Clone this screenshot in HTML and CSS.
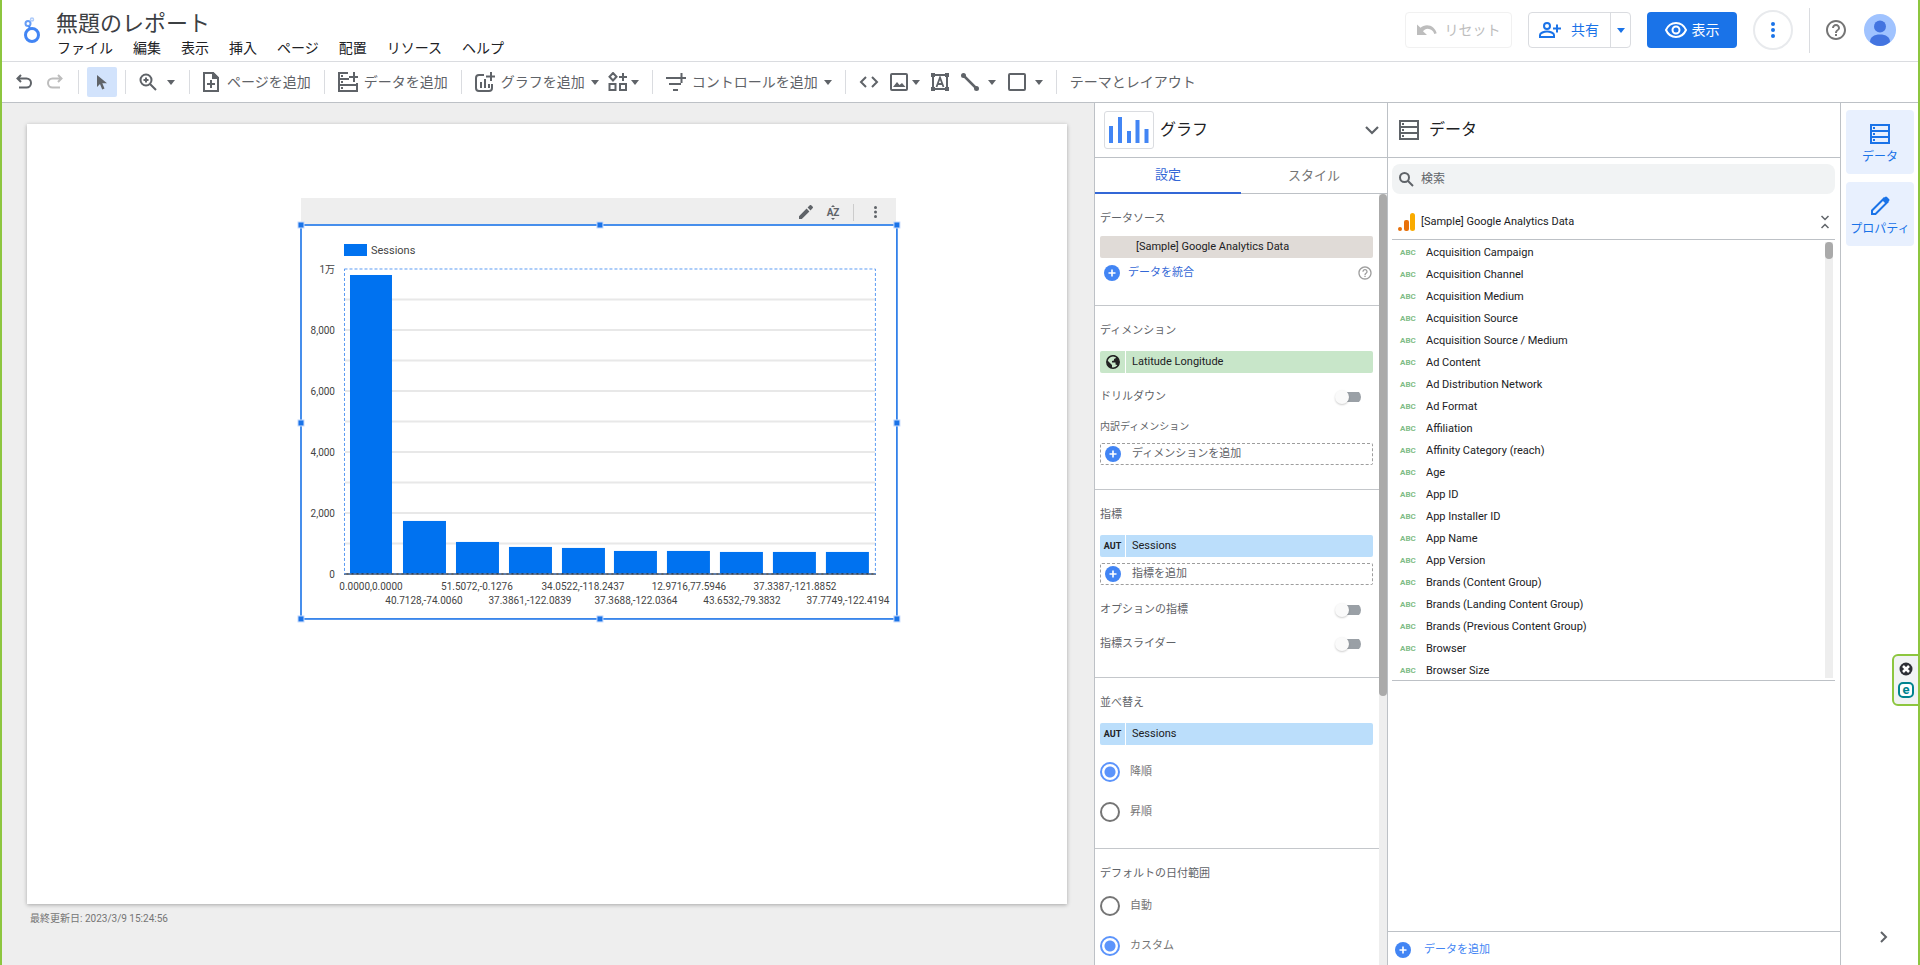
FILE: index.html
```html
<!DOCTYPE html>
<html lang="ja">
<head>
<meta charset="utf-8">
<title>無題のレポート</title>
<link rel="stylesheet" href="styles.css">
</head>
<body>
<svg class="defs" aria-hidden="true">
  <symbol id="caret" viewBox="0 0 8 5"><path d="M0 0h8L4 5z" fill="currentColor"/></symbol>
  <symbol id="plus" viewBox="0 0 16 16"><circle cx="8" cy="8" r="8" fill="#4285f4"/><path d="M8 4.500v7M4.500 8h7" stroke="#fff" stroke-width="1.600"/></symbol>
  <symbol id="rows" viewBox="0 0 20 20"><path d="M1 1h18v18H1zM1 7h18M1 13h18" fill="none" stroke="currentColor" stroke-width="2"/><path d="M3 3h2v2H3zM3 9h2v2H3zM3 15h2v2H3z" fill="currentColor"/></symbol>
  <symbol id="help" viewBox="0 0 24 24"><path fill="currentColor" d="M11 18h2v-2h-2v2zm1-16C6.480 2 2 6.480 2 12s4.480 10 10 10 10-4.480 10-10S17.520 2 12 2zm0 18c-4.410 0-8-3.590-8-8s3.590-8 8-8 8 3.590 8 8-3.590 8-8 8zm0-14c-2.210 0-4 1.790-4 4h2c0-1.100.9-2 2-2s2 .9 2 2c0 2-3 1.750-3 5h2c0-2.250 3-2.500 3-5 0-2.210-1.790-4-4-4z"/></symbol>
  <symbol id="dots" viewBox="0 0 4 16"><circle cx="2" cy="2" r="2"/><circle cx="2" cy="8" r="2"/><circle cx="2" cy="14" r="2"/></symbol>
</svg>

<div class="app">
  <header class="header">
    <svg class="logo" viewBox="0 0 16 26" fill="none"><circle cx="8" cy="18" r="6.500" stroke="#4285f4" stroke-width="3"/><circle cx="4" cy="6.500" r="2.500" stroke="#669df6" stroke-width="2"/><circle cx="8" cy="2.500" r="1.500" stroke="#aecbfa" stroke-width="1.500"/><path d="M5 9l1 3" stroke="#4285f4" stroke-width="2"/></svg>
    <div class="titles">
      <h1 class="title">無題のレポート</h1>
      <nav class="menu">
        <button>ファイル</button><button>編集</button><button>表示</button><button>挿入</button><button>ページ</button><button>配置</button><button>リソース</button><button>ヘルプ</button>
      </nav>
    </div>
    <div class="actions">
      <button class="btn btn-reset" disabled><svg width="20" height="12" viewBox="0 0 20 12"><path fill="currentColor" d="M10 1.200c-2.500 0-4.800 1-6.500 2.500L0 .4V11h10L6 7.200c1.300-1.200 2.600-2.400 4.700-2.400 3.200 0 5.700 2.200 6.600 5.200l2.400-.8C18.400 4.700 14.800 1.200 10 1.200z"/></svg>リセット</button>
      <div class="share">
        <button class="share-main"><svg width="22" height="16" viewBox="0 0 22 16" fill="none" stroke="currentColor" stroke-width="2"><circle cx="8" cy="4" r="3"/><path d="M1 15v-2c0-2 4-3.500 7-3.500s7 1.500 7 3.500v2zM18 2.500v8M14 6.500h8"/></svg>共有</button>
        <button class="share-more" aria-label="共有オプション"><svg width="8" height="5"><use href="#caret"/></svg></button>
      </div>
      <button class="btn btn-view"><svg width="22" height="16" viewBox="0 0 22 16" fill="none" stroke="currentColor" stroke-width="2"><path d="M1 8c2-4.500 5.700-7 10-7s8 2.500 10 7c-2 4.500-5.700 7-10 7S3 12.500 1 8z"/><circle cx="11" cy="8" r="3.500"/></svg>表示</button>
      <button class="more" aria-label="その他"><svg width="4" height="16" fill="#1a73e8"><use href="#dots"/></svg></button>
      <span class="header-rule"></span>
      <button class="help" aria-label="ヘルプ"><svg width="24" height="24"><use href="#help"/></svg></button>
      <button class="avatar" aria-label="アカウント"><svg width="32" height="32" viewBox="0 0 32 32"><circle cx="16" cy="16" r="16" fill="#a0c3ff"/><circle cx="16" cy="12.500" r="6" fill="#4374e0"/><path d="M6 28c0-5 4-7.500 10-7.500S26 23 26 28c-3 2.600-6 4-10 4s-7-1.400-10-4z" fill="#4374e0"/></svg></button>
    </div>
  </header>

  <div class="toolbar">
    <button class="tool undo" aria-label="元に戻す"><svg width="16" height="16" viewBox="0 0 16 16" fill="none" stroke="currentColor" stroke-width="2"><path d="M5 1L1.500 4.500 5 8M2 4.500h8.500a4.500 4.500 0 010 9H3"/></svg></button>
    <button class="tool redo" aria-label="やり直し" disabled><svg width="16" height="16" viewBox="0 0 16 16" fill="none" stroke="currentColor" stroke-width="2"><path d="M11 1l3.500 3.500L11 8M14 4.500H5.500a4.500 4.500 0 000 9H13"/></svg></button>
    <span class="rule"></span>
    <button class="tool pointer" aria-label="選択"><svg width="10" height="15" viewBox="0 0 10 15"><path fill="currentColor" d="M0 0v12l3-3 2.200 5.500 2.300-1L5.300 8.300H10z"/></svg></button>
    <span class="rule"></span>
    <button class="tool zoom" aria-label="ズーム"><svg width="18" height="18" viewBox="0 0 18 18" fill="none" stroke="currentColor" stroke-width="2"><circle cx="7" cy="7" r="5.500"/><path d="M11 11l6 6M7 4.500v5M4.500 7h5"/></svg><svg width="8" height="5"><use href="#caret"/></svg></button>
    <span class="rule"></span>
    <button class="tool add-page"><svg width="16" height="20" viewBox="0 0 16 20" fill="none" stroke="currentColor" stroke-width="2"><path d="M10 1H1v18h14V6zM8 8v8M4 12h8"/><path d="M10 1v5h5z" fill="currentColor"/></svg>ページを追加</button>
    <span class="rule"></span>
    <button class="tool"><svg width="20" height="20" viewBox="0 0 20 20" fill="none" stroke="currentColor" stroke-width="2"><path d="M10 1H1v18h18v-6H1M1 7h10M16 0v10M11 5h9M19 13v-2"/><path d="M4 3v2M4 9v2M4 15v2" stroke-width="2"/></svg>データを追加</button>
    <span class="rule"></span>
    <button class="tool"><svg width="20" height="20" viewBox="0 0 20 20" fill="none" stroke="currentColor" stroke-width="2"><path d="M9 3H4a3 3 0 00-3 3v10a3 3 0 003 3h10a3 3 0 003-3v-4M6 10v6M10 7v9M14 12v4M16 0v9M11 4.500h9"/></svg>グラフを追加<svg width="8" height="5"><use href="#caret"/></svg></button>
    <button class="tool community" aria-label="コミュニティ ビジュアリゼーション"><svg width="20" height="20" viewBox="0 0 20 20" fill="none" stroke="currentColor" stroke-width="2"><path d="M5 1l3.500 3.800L5 8.500 1.500 4.800zM1.500 12h6v6h-6zM12 12h6v6h-6zM15 1v8M11 5h8"/></svg><svg width="8" height="5"><use href="#caret"/></svg></button>
    <span class="rule"></span>
    <button class="tool"><svg width="20" height="18" viewBox="0 0 20 18" fill="none" stroke="currentColor" stroke-width="2"><path d="M0 5h11M3 11h12M7 17h5M15.500 0v10M11 5h9"/></svg>コントロールを追加<svg width="8" height="5"><use href="#caret"/></svg></button>
    <span class="rule"></span>
    <div class="inserts">
      <button class="tool" aria-label="URL を埋め込む"><svg width="20" height="12" viewBox="0 0 20 12" fill="none" stroke="currentColor" stroke-width="2"><path d="M7 1L2 6l5 5M13 1l5 5-5 5"/></svg></button>
      <button class="tool" aria-label="画像"><svg width="18" height="18" viewBox="0 0 18 18"><rect x="1" y="1" width="16" height="16" rx="1" fill="none" stroke="currentColor" stroke-width="2"/><path fill="currentColor" d="M3 14l4-5 2.500 3 2.500-2 3.500 4z"/></svg><svg width="8" height="5"><use href="#caret"/></svg></button>
      <button class="tool" aria-label="テキスト"><svg width="18" height="18" viewBox="0 0 18 18" fill="none" stroke="currentColor" stroke-width="2"><path d="M2 2h14v14H2z"/><path d="M5.500 14L9 4.500l3.500 9.500M6.500 11h5" stroke-width="1.800"/><path d="M0 0h4v4H0zM14 0h4v4h-4zM0 14h4v4H0zM14 14h4v4h-4z" fill="currentColor" stroke="none"/></svg></button>
      <button class="tool line-tool" aria-label="線"><svg width="18" height="18" viewBox="0 0 18 18"><path d="M2.500 2.500l13 13" stroke="currentColor" stroke-width="2.500"/><circle cx="2.500" cy="2.500" r="2.500" fill="currentColor"/><circle cx="15.500" cy="15.500" r="2.500" fill="currentColor"/></svg><svg width="8" height="5"><use href="#caret"/></svg></button>
      <button class="tool line-tool" aria-label="図形"><svg width="18" height="18" viewBox="0 0 18 18"><rect x="1" y="1" width="16" height="16" rx="1" fill="none" stroke="currentColor" stroke-width="2"/></svg><svg width="8" height="5"><use href="#caret"/></svg></button>
    </div>
    <span class="rule"></span>
    <button class="tool">テーマとレイアウト</button>
  </div>

  <div class="body">
    <main class="workspace">
      <div class="page">
        <div class="widget">
          <div class="widget-bar">
            <button aria-label="編集"><svg width="14" height="14" viewBox="0 0 14 14"><path fill="currentColor" d="M0 11.200V14h2.800l7.600-7.600-2.800-2.800zM13.300 3.500c.9-.8.9-1.400.2-2.100l-1-1c-.7-.6-1.300-.6-2 .1L8.600 2.500l2.900 2.900z"/></svg></button>
            <button class="az" aria-label="並べ替え"><svg width="6" height="3" viewBox="0 0 6 3"><path d="M3 0l2 2H1z" fill="currentColor"/></svg><span>AZ</span><svg width="6" height="3" viewBox="0 0 6 3"><path d="M3 3l2-2H1z" fill="currentColor"/></svg></button>
            <span class="widget-rule"></span>
            <button aria-label="その他"><svg width="3" height="12" viewBox="0 0 4 16" fill="currentColor"><use href="#dots"/></svg></button>
          </div>
          <svg class="chart" viewBox="0 0 596 395">
            <rect x="43" y="20" width="23" height="12" fill="#0072f0"/>
            <text class="legend" x="70" y="30">Sessions</text>
            <path d="M44 75.500h530M44 106h530M44 136.500h530M44 167h530M44 197.500h530M44 228h530M44 258.500h530M44 289h530M44 319.500h530" stroke="#e8e8e8" stroke-width="2"/>
            <g class="axis-y">
              <text x="34" y="49">1万</text><text x="34" y="110">8,000</text><text x="34" y="171">6,000</text><text x="34" y="232">4,000</text><text x="34" y="293">2,000</text><text x="34" y="354">0</text>
            </g>
            <g fill="#0072f0">
              <rect x="49" y="51" width="42" height="299"/><rect x="102" y="297" width="43" height="53"/><rect x="155" y="318" width="43" height="32"/><rect x="208" y="323" width="43" height="27"/><rect x="261" y="324" width="43" height="26"/><rect x="313" y="327" width="43" height="23"/><rect x="366" y="327" width="43" height="23"/><rect x="419" y="328" width="43" height="22"/><rect x="472" y="328" width="43" height="22"/><rect x="525" y="328" width="43" height="22"/>
            </g>
            <path d="M43 350h532" stroke="#333" stroke-width="1.500"/>
            <rect x="43.500" y="45" width="531" height="305" fill="none" stroke="#5b9bf3" stroke-dasharray="3 2"/>
            <g class="axis-x">
              <text x="70" y="366">0.0000,0.0000</text><text x="176" y="366">51.5072,-0.1276</text><text x="282" y="366">34.0522,-118.2437</text><text x="388" y="366">12.9716,77.5946</text><text x="494" y="366">37.3387,-121.8852</text>
              <text x="123" y="380">40.7128,-74.0060</text><text x="229" y="380">37.3861,-122.0839</text><text x="335" y="380">37.3688,-122.0364</text><text x="441" y="380">43.6532,-79.3832</text><text x="547" y="380">37.7749,-122.4194</text>
            </g>
            <rect x="0" y="1" width="596" height="394" fill="none" stroke="#1a73e8" stroke-width="1.600"/>
            <g fill="#1a73e8" stroke="#c6dafc">
              <rect x="-3" y="-2" width="6" height="6"/><rect x="296" y="-2" width="6" height="6"/><rect x="593" y="-2" width="6" height="6"/>
              <rect x="-3" y="196" width="6" height="6"/><rect x="593" y="196" width="6" height="6"/>
              <rect x="-3" y="392" width="6" height="6"/><rect x="296" y="392" width="6" height="6"/><rect x="593" y="392" width="6" height="6"/>
            </g>
          </svg>
        </div>
      </div>
      <p class="updated">最終更新日: 2023/3/9 15:24:56</p>
    </main>

    <aside class="props">
      <div class="panel-head props-head">
        <span class="chart-type"><svg width="40" height="30" viewBox="0 0 40 30"><path d="M2 11v17M11 2v26M20 16v12M28.500 5v23M37.500 14v14" stroke="#4285f4" stroke-width="4"/></svg></span>
        <h2>グラフ</h2>
        <button class="chevron" aria-label="グラフの種類"><svg width="14" height="9" viewBox="0 0 14 9" fill="none" stroke="#5f6368" stroke-width="2.200"><path d="M1 1l6 6 6-6"/></svg></button>
      </div>
      <div class="tabs"><button class="tab active">設定</button><button class="tab">スタイル</button></div>
      <div class="scroll">
        <div class="sections">
          <section class="section source">
            <h3>データソース</h3>
            <button class="chip chip-source">[Sample] Google Analytics Data</button>
            <div class="blend"><button class="link"><svg width="16" height="16"><use href="#plus"/></svg>データを統合</button><svg class="hint" width="16" height="16"><use href="#help"/></svg></div>
          </section>
          <section class="section dims">
            <h3>ディメンション</h3>
            <button class="chip chip-dim"><span class="chip-type"><svg width="14" height="14" viewBox="0 0 14 14"><circle cx="7" cy="7" r="6.200" fill="none" stroke="#222" stroke-width="1.500"/><path fill="#222" d="M1 5l5 5v3C3 13 .5 10 1 5zM5 1h5v2L8 4v1.500L6 6v1.500h3.500v2L11 10l1.500 1 .8-4L11.500 2.500 8 0z"/></svg></span><span>Latitude Longitude</span></button>
            <label class="switch-row">ドリルダウン<input type="checkbox" class="switch"></label>
            <h4>内訳ディメンション</h4>
            <button class="add"><svg width="16" height="16"><use href="#plus"/></svg>ディメンションを追加</button>
          </section>
          <section class="section metrics">
            <h3>指標</h3>
            <button class="chip chip-metric"><span class="chip-type">AUT</span><span>Sessions</span></button>
            <button class="add"><svg width="16" height="16"><use href="#plus"/></svg>指標を追加</button>
            <label class="switch-row">オプションの指標<input type="checkbox" class="switch"></label>
            <label class="switch-row">指標スライダー<input type="checkbox" class="switch"></label>
          </section>
          <section class="section sort">
            <h3>並べ替え</h3>
            <button class="chip chip-metric"><span class="chip-type">AUT</span><span>Sessions</span></button>
            <div class="radios">
              <label><input type="radio" name="order" checked>降順</label>
              <label><input type="radio" name="order">昇順</label>
            </div>
          </section>
          <section class="section range">
            <h3>デフォルトの日付範囲</h3>
            <div class="radios">
              <label><input type="radio" name="range">自動</label>
              <label><input type="radio" name="range" checked>カスタム</label>
            </div>
          </section>
        </div>
        <div class="track"><span class="thumb"></span></div>
      </div>
    </aside>

    <aside class="data">
      <div class="panel-head"><svg width="20" height="20"><use href="#rows"/></svg><h2>データ</h2></div>
      <div class="data-main">
        <label class="search"><svg width="15" height="15" viewBox="0 0 15 15" fill="none" stroke="#5f6368" stroke-width="2"><circle cx="5.500" cy="5.500" r="4.500"/><path d="M9 9l5 5"/></svg><input type="search" placeholder="検索" aria-label="検索"></label>
        <div class="source-row"><svg width="17" height="18" viewBox="0 0 17 18"><circle cx="2" cy="16" r="2" fill="#e8710a"/><rect x="6" y="7" width="5" height="11" rx="2" fill="#e8710a"/><rect x="12" y="0" width="5" height="18" rx="2.500" fill="#f9ab00"/></svg><span>[Sample] Google Analytics Data</span><button aria-label="折りたたむ"><svg width="8" height="14" viewBox="0 0 8 14" fill="none" stroke="#5f6368" stroke-width="1.500"><path d="M.5 1L4 4.500 7.500 1M.5 13L4 9.500 7.500 13"/></svg></button></div>
        <div class="fields-box">
          <ul class="fields">
            <li>Acquisition Campaign</li><li>Acquisition Channel</li><li>Acquisition Medium</li><li>Acquisition Source</li><li>Acquisition Source / Medium</li><li>Ad Content</li><li>Ad Distribution Network</li><li>Ad Format</li><li>Affiliation</li><li>Affinity Category (reach)</li><li>Age</li><li>App ID</li><li>App Installer ID</li><li>App Name</li><li>App Version</li><li>Brands (Content Group)</li><li>Brands (Landing Content Group)</li><li>Brands (Previous Content Group)</li><li>Browser</li><li>Browser Size</li>
          </ul>
          <div class="track"><span class="thumb"></span></div>
        </div>
      </div>
      <div class="data-foot"><button class="link"><svg width="16" height="16"><use href="#plus"/></svg>データを追加</button></div>
    </aside>

    <nav class="rail">
      <button class="rail-btn"><svg width="20" height="20"><use href="#rows"/></svg>データ</button>
      <button class="rail-btn"><svg width="20" height="20" viewBox="0 0 20 20"><path d="M2 18v-3.500L14 2.500 17.500 6 5.500 18z" fill="none" stroke="currentColor" stroke-width="2"/><path d="M12 4l3-3c.7-.7 1.300-.7 2 0l2 2c.7.7.7 1.300 0 2l-3 3z" fill="currentColor"/></svg>プロパティ</button>
      <button class="rail-close" aria-label="パネルを閉じる"><svg width="8" height="12" viewBox="0 0 8 12" fill="none" stroke="#5f6368" stroke-width="2"><path d="M1 1l5 5-5 5"/></svg></button>
    </nav>
  </div>

  <div class="float">
    <button aria-label="閉じる"><svg width="14" height="14" viewBox="0 0 14 14"><circle cx="7" cy="7" r="6.500" fill="#2d2f36"/><path d="M4 4l6 6M10 4l-6 6" stroke="#fff" stroke-width="2.500"/></svg></button>
    <button class="float-e">e</button>
  </div>
</div>
</body>
</html>
```
FILE: styles.css
```css
* { box-sizing: border-box; }
body { margin: 0; font: 11px/16px Roboto, "Noto Sans CJK JP", sans-serif; color: #5f6368; background: #fff; }
h1, h2, h3, h4, p, ul { margin: 0; padding: 0; font-weight: 400; }
button, input { font: inherit; color: inherit; background: none; border: 0; padding: 0; margin: 0; }
svg { display: block; flex: none; }
.defs { position: absolute; width: 0; height: 0; }
.app { height: 100vh; display: flex; flex-direction: column; border: solid #8dc63f; border-width: 0 2px; overflow: hidden; position: relative; }

/* header */
.header { display: flex; align-items: center; height: 62px; border-bottom: 1px solid #dadce0; padding: 0 22px 1px; flex: none; }
.logo { width: 16px; height: 26px; }
.titles { margin-left: 16px; padding-top: 8px; flex: 1; }
.title { font-size: 22px; line-height: 28px; color: #3c4043; }
.menu { display: flex; gap: 20px; padding-left: 1px; font-size: 14px; line-height: 20px; color: #202124; }
.actions { display: flex; align-items: center; font-size: 14px; }
.btn { display: flex; align-items: center; justify-content: center; height: 36px; border-radius: 4px; }
.btn-reset { width: 107px; gap: 8px; border: 1px solid #f1f1f1; color: #bdbdbd; }
.share { display: flex; height: 36px; margin: 0 16px; border: 1px solid #dadce0; border-radius: 4px; color: #1a73e8; }
.share-main { display: flex; align-items: center; gap: 10px; padding: 0 11px 0 10px; border-right: 1px solid #dadce0; }
.share-more { padding: 0 5px 0 6px; }
.btn-view { width: 90px; gap: 5px; background: #1a73e8; color: #fff; }
.more { display: flex; align-items: center; justify-content: center; width: 40px; height: 40px; margin-left: 16px; border: 2px solid #e8eaed; border-radius: 50%; }
.header-rule { width: 1px; height: 45px; margin: 0 14px 0 16px; background: #dadce0; }
.help { color: #757575; }
.avatar { margin-left: 16px; }

/* toolbar */
.toolbar { display: flex; align-items: center; height: 41px; padding-left: 14px; border-bottom: 1px solid #bdc1c6; font-size: 14px; flex: none; }
.tool { display: flex; align-items: center; gap: 6px; white-space: nowrap; }
.redo { margin-left: 15px; color: #bdbdbd; }
.rule { width: 1px; height: 24px; margin: 0 13px; background: #dadce0; }
.redo + .rule { margin-left: 15px; }
.pointer { width: 30px; height: 30px; justify-content: center; margin: 0 -5px; border-radius: 2px; background: #d2e3fc; }
.zoom { gap: 10px; margin-right: 1px; }
.add-page { gap: 8px; }
.community { gap: 3px; margin-left: 9px; }
.inserts { display: flex; align-items: center; gap: 11px; }
.inserts .tool { gap: 4px; }
.inserts .line-tool { gap: 9px; margin-left: 1px; }

/* layout */
.body { display: flex; flex: 1; min-height: 0; }
.workspace { flex: 1; min-width: 0; padding: 21px 27px 0 25px; background: #eee; overflow: hidden; }
.page { position: relative; aspect-ratio: 4 / 3; background: #fff; box-shadow: 0 1px 4px rgba(0, 0, 0, .3); }
.updated { margin: 7px 0 0 3px; font-size: 10px; color: #757575; }

/* chart widget placed on the report canvas */
.widget { position: absolute; left: 26.300%; top: 9.500%; width: 57.300%; }
.widget-bar { display: flex; align-items: center; justify-content: flex-end; height: 26px; padding: 2px 19px 0 0; background: #eee; color: #5f6368; }
.az { display: flex; flex-direction: column; align-items: center; margin-left: 14px; font-size: 10px; line-height: 9px; font-weight: 700; }
.widget-rule { width: 1px; height: 17px; margin: 0 20px 0 14px; background: #ccc; }
.chart { width: 100%; overflow: visible; background: #fff; }
.chart text { fill: #444; font-size: 10px; }
.chart .legend { font-size: 11px; }
.axis-y { text-anchor: end; }
.axis-x { text-anchor: middle; }

/* panels */
.panel-head { display: flex; align-items: center; height: 55px; padding: 0 11px; gap: 10px; border-bottom: 1px solid #bdc1c6; color: #5f6368; flex: none; }
.panel-head h2 { font-size: 16px; line-height: 24px; color: #202124; }
.props { display: flex; flex-direction: column; width: 294px; border: solid #bdc1c6; border-width: 0 1px; flex: none; }
.props-head { padding: 0 8px 0 9px; gap: 6px; }
.chart-type { display: flex; align-items: center; justify-content: center; width: 50px; height: 38px; border: 1px solid #dadce0; border-radius: 3px; }
.chevron { margin-left: auto; }
.tabs { display: flex; height: 36px; border-bottom: 1px solid #bdc1c6; font-size: 13px; flex: none; }
.tab { flex: 1; height: 36px; color: #757575; }
.tab.active { color: #3367d6; border-bottom: 2px solid #3367d6; }
.scroll { display: flex; flex: 1; min-height: 0; overflow: hidden; }
.sections { flex: 1; min-width: 0; }
.track { width: 8px; background: #eee; flex: none; }
.thumb { display: block; height: 502px; border-radius: 4px; background: #aaa; }
.section { padding: 17px 6px 24px 5px; border-bottom: 1px solid #c4c7cb; }
.section:last-child { border-bottom: 0; }
.section h3 { font-size: 11px; line-height: 16px; margin-bottom: 12px; }
.section h4 { font-size: 10px; line-height: 16px; margin: 14px 0 8px; }
.source h3 { margin-bottom: 9px; }
.metrics { padding-bottom: 16px; }
.sort { padding-bottom: 26px; }
.section.range h3 { margin-bottom: 14px; }
.chip { display: flex; align-items: center; width: 100%; height: 22px; border-radius: 2px; color: #202124; text-align: left; }
.chip-source { padding-left: 36px; background: #e0dbd7; }
.chip-dim { background: #c8e6c9; }
.chip-metric { background: #bbdefb; }
.chip-type { display: flex; align-items: center; justify-content: center; width: 26px; height: 22px; margin-right: 6px; border-right: 1px solid #fff; font-size: 9px; font-weight: 700; }
.blend { display: flex; align-items: center; justify-content: space-between; margin-top: 7px; }
.blend .link { padding-left: 4px; }
.hint { color: #9e9e9e; }
.link { display: flex; align-items: center; gap: 8px; color: #3367d6; }
.switch-row { display: flex; align-items: center; justify-content: space-between; height: 34px; padding-right: 12px; }
.dims .switch-row { height: 16px; margin-top: 16px; }
.metrics .switch-row:first-of-type { margin-top: 8px; }
.switch { position: relative; appearance: none; width: 26px; height: 14px; margin: 0; background: linear-gradient(#9aa0a6, #9aa0a6) 8px 2px / 18px 10px no-repeat; border-radius: 0 7px 7px 0; }
.switch::before { content: ""; position: absolute; left: 0; top: 0; width: 14px; height: 14px; border-radius: 50%; background: #fafafa; box-shadow: 0 1px 2px rgba(0, 0, 0, .2); }
.add { display: flex; align-items: center; gap: 11px; width: 100%; height: 22px; padding-left: 4px; border: 1px dashed #9e9e9e; border-radius: 2px; }
.chip + .add { margin-top: 6px; }
.chip + .radios { margin-top: 17px; }
.radios { display: flex; flex-direction: column; gap: 20px; color: #757575; }
.radios label { display: flex; align-items: center; gap: 10px; height: 20px; }
.radios input { appearance: none; width: 20px; height: 20px; border: 2px solid #757575; border-radius: 50%; }
.radios input:checked { border-color: #5c94fb; background: radial-gradient(#5c94fb 5px, #fff 6px); }

/* data panel */
.data { display: flex; flex-direction: column; width: 453px; border-right: 1px solid #bdc1c6; flex: none; color: #202124; }
.data-main { flex: 1; min-height: 0; padding: 6px 5px 0 4px; }
.search { display: flex; align-items: center; gap: 7px; height: 30px; padding-left: 7px; border-radius: 8px; background: #f1f3f4; font-size: 12px; color: #5f6368; }
.search input { flex: 1; min-width: 0; outline: 0; }
.search input::placeholder { color: #5f6368; opacity: 1; }
.source-row { display: flex; align-items: center; gap: 6px; height: 46px; padding: 10px 6px 0; border-bottom: 1px solid #bdc1c6; }
.source-row button { margin-left: auto; }
.fields-box { display: flex; height: 441px; padding: 2px 2px 2px 0; border-bottom: 1px solid #bdc1c6; }
.fields { flex: 1; list-style: none; }
.fields li { display: flex; align-items: center; height: 22px; padding-left: 8px; }
.fields li::before { content: "ABC"; width: 26px; font-size: 8px; font-weight: 700; color: #81bd86; }
.fields-box .thumb { height: 17px; }
.data-foot { height: 34px; padding: 10px 7px; border-top: 1px solid #bdc1c6; }
.data-foot .link { gap: 13px; color: #4285f4; }

/* rail */
.rail { display: flex; flex-direction: column; align-items: center; gap: 8px; width: 77px; padding: 7px 4px 22px 5px; flex: none; }
.rail-btn { display: flex; flex-direction: column; align-items: center; gap: 5px; width: 100%; height: 64px; padding-top: 14px; border-radius: 4px; background: #e8f0fe; color: #1a73e8; font-size: 12px; }
.rail-close { margin-top: auto; padding-left: 8px; }

/* extension tab floating over the right edge */
.float { position: absolute; right: -2px; top: 654px; display: flex; flex-direction: column; align-items: center; gap: 6px; width: 28px; padding: 6px 0; border: 2px solid #8dc63f; border-radius: 6px 0 0 6px; background: #f1f3f4; }
.float-e { width: 16px; height: 16px; border: 2px solid #00838f; border-radius: 5px; background: #fff; color: #00838f; font-size: 13px; line-height: 10px; font-weight: 700; }
```
